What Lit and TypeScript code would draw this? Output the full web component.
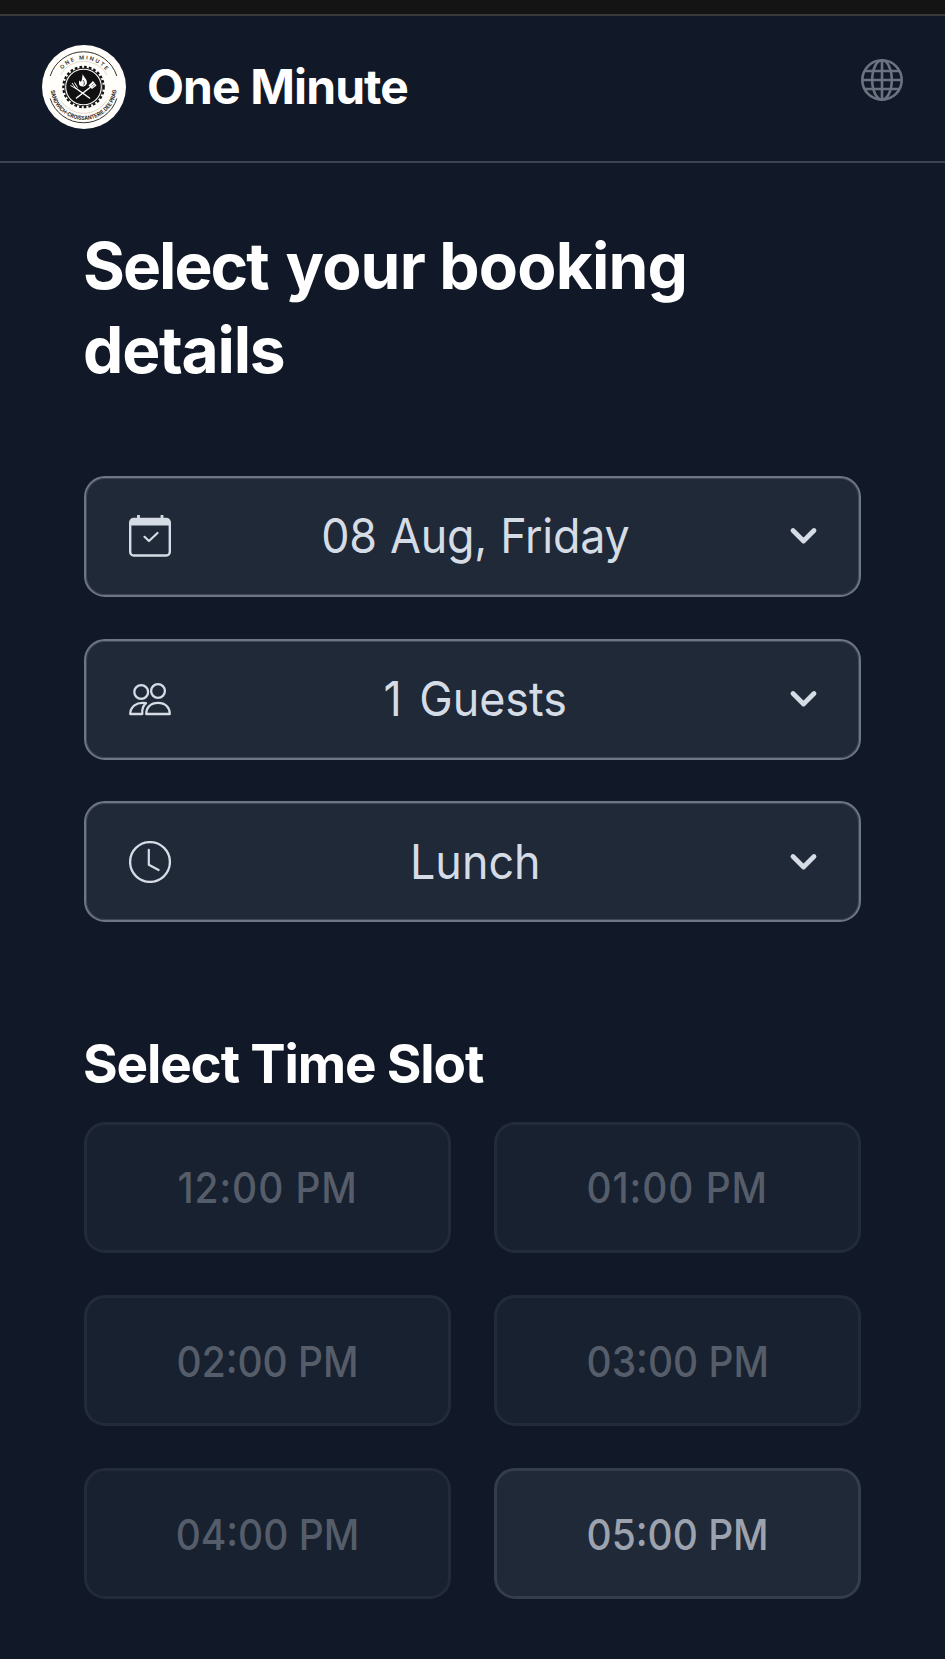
import { LitElement, html, css, svg } from "lit";
import { customElement, state } from "lit/decorators.js";

const calendarIcon = svg`
  <rect x="1.2" y="4" width="39.600" height="36.500" rx="3.5" stroke-width="2.4"/>
  <path d="M1 10.600V7Q1 3.600 4.500 3.600H37.500Q41 3.600 41 7V10.600Z" fill="currentColor" stroke="none"/>
  <path d="M9.500 0V4M33 0V4" stroke-width="2.800"/>
  <path d="M15.500 21.800L20 26L28.500 18" stroke-width="2.200" stroke-linecap="round" stroke-linejoin="round"/>`;

const guestsIcon = svg`
  <circle cx="12.200" cy="14" r="6.900" stroke-width="2.300"/>
  <circle cx="29" cy="13" r="6.900" stroke-width="2.300"/>
  <path d="M17.200 36C17.200 29.500 21.500 24.900 29 24.900S40.800 29.500 40.800 36Z" stroke-width="2.300" stroke-linejoin="round"/>
  <path d="M17 25.200C7 23.300 1.400 29.500 1.200 36H13.300C12.800 31.500 13.800 28 17 25.200Z" stroke-width="2.300" stroke-linejoin="round"/>`;

const clockIcon = svg`
  <circle cx="21" cy="21" r="19.900" stroke-width="2.300"/>
  <path d="M19.800 8.800V23.800L29.600 29" stroke-width="2.200" stroke-linecap="round" stroke-linejoin="round"/>`;

@customElement("brand-logo")
class BrandLogo extends LitElement {
  static styles = css`
    :host { display: block; width: 84px; height: 84px; }
    svg { display: block; }
    .ring-text { font-family: Inter, "Liberation Sans", sans-serif; fill: #2b2a28; }
  `;
  render() {
    return html`<svg width="84" height="84" viewBox="0 0 84 84" fill="none">
      <circle cx="42" cy="42" r="42" fill="#fffefb"/>
      <path d="M8.200 31A35 35 0 0 1 74.800 31M8.200 53.500A35 35 0 0 0 74.800 53.500" stroke="#35332f" stroke-width="1"/>
      <path d="M18.500 30A26.500 26.500 0 0 1 65 30M18.500 55A27 27 0 0 0 65 55" stroke="#d8d0bb" stroke-width=".8"/>
      <path id="top" d="M14 42A27.600 27.600 0 0 1 69.200 42"/>
      <path id="bottom" d="M8.600 42A33 33 0 0 0 74.600 42"/>
      <text class="ring-text" font-size="5.400" font-weight="600"><textPath href="#top" startOffset="19" textLength="50">ONE MINUTE</textPath></text>
      <text class="ring-text" font-size="5.600" font-weight="700"><textPath href="#bottom" startOffset="3.500" textLength="97" lengthAdjust="spacingAndGlyphs">SANDWICH-CROISSANTERIE.DEE PRAG</textPath></text>
      <circle cx="41.500" cy="42" r="19.300" fill="#111"/>
      <circle cx="41.500" cy="42" r="20.200" stroke="#111" stroke-width="2.200" stroke-dasharray="2.700 2.060"/>
      <circle cx="41.500" cy="42" r="17.800" stroke="#fffefb" stroke-width="1.100"/>
      <path d="M40.800 29C42 33 45.800 34.500 44.800 38.500C44 41 42 41.500 40.500 41.500C37.500 41.500 36 38.500 37.500 35.500L39 37C40.500 34.500 40 31.500 40.800 29Z" fill="#fff"/>
      <path d="M41 35C42.500 37 42.800 38.500 41.600 40.500" stroke="#111" stroke-width=".8"/>
      <path d="M34.500 53L48 42.500M47.500 53L33.500 43" stroke="#fff" stroke-width="1.500" stroke-linecap="round"/>
      <path d="M30 38L33.500 43M28.500 40.500L34 43.500M32.500 37.500L35.500 42.500" stroke="#fff" stroke-width="1"/>
      <path d="M46.500 40.500L51 36L54.500 40.500L50 44Z" fill="#fff"/>
      <path d="M49.500 40.500L51.500 38.500M50.500 42L52.800 40" stroke="#111" stroke-width=".6"/>
    </svg>`;
  }
}

@customElement("select-field")
class SelectField extends LitElement {
  static properties = { icon: { attribute: false }, label: { type: String }, kind: { type: String } };
  declare icon: unknown;
  declare label: string;
  declare kind: string;
  static styles = css`
    :host { display: block; }
    .field {
      box-sizing: border-box; width: 100%; height: 121px; padding: 0 39.500px 0 42.500px;
      display: grid; grid-template-columns: 42px 1fr 32px; align-items: center;
      border: 2px solid #6d7682; box-shadow: inset 0 0 0 1px #3f4956; border-radius: 21px; background: #1f2937;
      color: #d5dce6; font-family: Inter, "Liberation Sans", sans-serif; font-size: 48px; line-height: 58px;
      cursor: pointer;
    }
    .label { text-align: center; white-space: nowrap; font-weight: 400; transform: scaleX(.935); padding-right: 9px; }
    .date { letter-spacing: -.300px; word-spacing: 1px; }
    .guests { word-spacing: 5px; }
    svg { display: block; fill: none; stroke: currentColor; }
  `;
  render() {
    return html`<button class="field">
      <svg width="42" height="42" viewBox="0 0 42 42">${this.icon}</svg>
      <span class="label ${this.kind}">${this.label}</span>
      <svg width="32" height="32" viewBox="0 0 32 32"><path d="M5 10.500L15.500 21L26 10.500" stroke-width="4.800" stroke-linecap="round" stroke-linejoin="round"/></svg>
    </button>`;
  }
}

@customElement("app-root")
class AppRoot extends LitElement {
  @state() slots = [
    { time: "12:00 PM", open: false }, { time: "01:00 PM", open: false },
    { time: "02:00 PM", open: false }, { time: "03:00 PM", open: false },
    { time: "04:00 PM", open: false }, { time: "05:00 PM", open: true },
  ];
  static styles = css`
    :host { display: block; width: 100%; height: 1659px; overflow: hidden; background: #111827; color: #fff; font-family: Inter, "Liberation Sans", sans-serif; }
    .status { box-sizing: border-box; height: 16px; background: #141414; border-bottom: 2px solid #393a3b; }
    .header { box-sizing: border-box; height: 147px; border-bottom: 2px solid #3a4454; padding: 29px 42px 0; display: flex; align-items: flex-start; }
    .name { margin-left: 21px; font-size: 48px; line-height: 84px; font-weight: 700; letter-spacing: -.900px; flex: 1; }
    .globe { margin-top: 14px; display: block; fill: none; stroke: #6b7280; }
    .main { padding: 61px 84px 0; }
    .title { margin: 0 0 0 -1px; font-size: 64px; line-height: 84px; font-weight: 700; letter-spacing: -1.200px; }
    .tight { letter-spacing: -2px; margin-right: 4px; }
    .loose { letter-spacing: -.800px; }
    .fields { margin-top: 83.800px; display: grid; gap: 41.800px; }
    .subtitle { box-sizing: border-box; margin: 108px 0 0 -1px; padding-top: 1px; height: 91.400px; font-size: 53px; line-height: 66px; font-weight: 700; letter-spacing: -1.150px; }
    .slots { display: grid; grid-template-columns: 1fr 1fr; gap: 42.300px; }
    .slot { box-sizing: border-box; height: 131px; border: 3px solid #333d4b; border-radius: 21px; background: #1f2937; color: #9ca3af; font: 500 43px/52px Inter, "Liberation Sans", sans-serif; }
    .time { display: inline-block; transform: scaleX(.905); }
    .narrow { letter-spacing: 1px; }
    .closed { border-color: #222b38; background: #18212f; color: #565d6a; }
  `;
  render() {
    return html`
      <div class="status"></div>
      <header class="header">
        <brand-logo></brand-logo>
        <div class="name">One Minute</div>
        <svg class="globe" width="42" height="42" viewBox="0 0 42 42" stroke-width="2.600">
          <circle cx="21" cy="21" r="19.700"/><ellipse cx="21" cy="21" rx="9.800" ry="19.700"/>
          <path d="M21 1.300V40.700M1.300 21H40.700M4 12H38M4 30H38"/>
        </svg>
      </header>
      <main class="main">
        <h1 class="title"><span class="tight">Select</span> <span class="loose">your booking</span><br>details</h1>
        <div class="fields">
          <select-field kind="date" label="08 Aug, Friday" .icon=${calendarIcon}></select-field>
          <select-field kind="guests" label="1 Guests" .icon=${guestsIcon}></select-field>
          <select-field kind="meal" label="Lunch" .icon=${clockIcon}></select-field>
        </div>
        <h2 class="subtitle">Select Time Slot</h2>
        <div class="slots">
          ${this.slots.map((s) => html`<button class="slot ${s.open ? "" : "closed"}" ?disabled=${!s.open}><span class="time ${s.time.includes("1") ? "narrow" : ""}">${s.time}</span></button>`)}
        </div>
      </main>`;
  }
}
